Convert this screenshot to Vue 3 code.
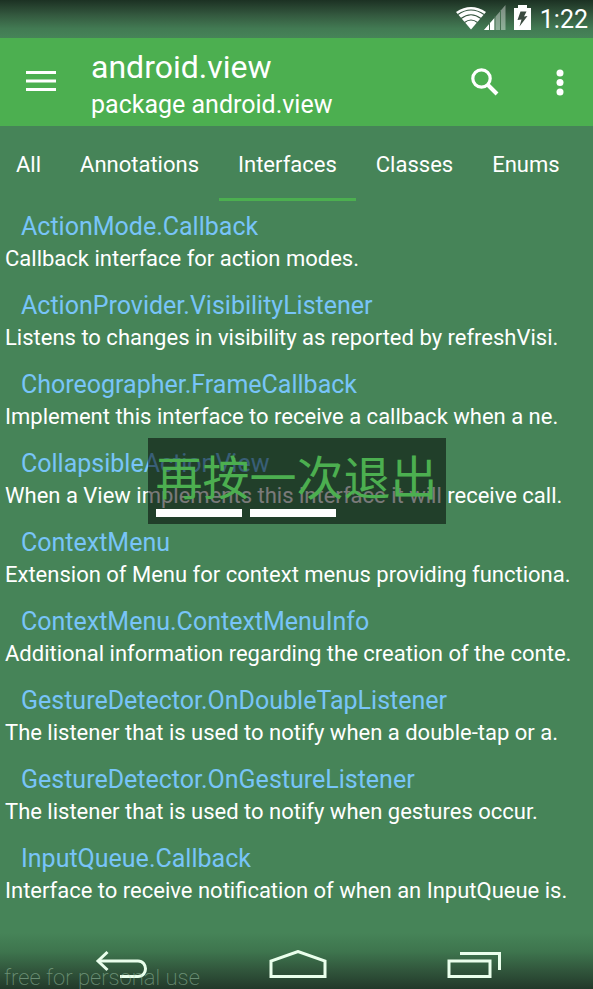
<script setup>
import { ref } from 'vue'

const tabs = ['All', 'Annotations', 'Interfaces', 'Classes', 'Enums']
const active = ref('Interfaces')

const entries = [
  { name: 'ActionMode.Callback', text: 'Callback interface for action modes.' },
  { name: 'ActionProvider.VisibilityListener', text: 'Listens to changes in visibility as reported by refreshVisi.' },
  { name: 'Choreographer.FrameCallback', text: 'Implement this interface to receive a callback when a ne.' },
  { name: 'CollapsibleActionView', text: 'When a View implements this interface it will receive call.' },
  { name: 'ContextMenu', text: 'Extension of Menu for context menus providing functiona.' },
  { name: 'ContextMenu.ContextMenuInfo', text: 'Additional information regarding the creation of the conte.' },
  { name: 'GestureDetector.OnDoubleTapListener', text: 'The listener that is used to notify when a double-tap or a.' },
  { name: 'GestureDetector.OnGestureListener', text: 'The listener that is used to notify when gestures occur.' },
  { name: 'InputQueue.Callback', text: 'Interface to receive notification of when an InputQueue is.' },
]
</script>

<template>
  <div class="screen">
    <div class="status">
      <svg class="radio" width="50" height="26" viewBox="0 0 50 26" aria-hidden="true">
        <path d="M15 24.500 L0 7 Q15 -3 30 7 Z" fill="#fff" />
        <g fill="none" stroke="#35553f" stroke-width="1.200">
          <path d="M2 9.500 Q15 0.500 28 9.500" />
          <path d="M5 13.500 Q15 6 25 13.500" />
          <path d="M8.500 17.500 Q15 12.500 21.500 17.500" />
        </g>
        <path d="M28 25 L49.500 0 V25 Z" fill="#fff" fill-opacity=".4" />
        <path d="M28 25 L38.500 13 V25 Z" fill="#fff" />
        <path d="M33.500 17 V25 M39 11 V25 M44.500 5 V25" stroke="#467052" />
      </svg>
      <svg class="battery" width="17" height="26" viewBox="0 0 17 26" aria-hidden="true">
        <path d="M4 0 H13 V3 H17 V25 H0 V3 H4 Z" fill="#fff" />
        <path d="M6.500 6.500 L12.500 6.500 L10 11.500 L13.500 11 L5.500 21.500 L7.500 14.500 L3.500 15 Z" fill="#3a4a3f" />
      </svg>
      <span class="clock">1:22</span>
    </div>

    <header class="toolbar">
      <button class="icon menu" aria-label="Menu">
        <svg width="30" height="24" viewBox="0 0 30 24">
          <path d="M0 2.500 H30 M0 11 H30 M0 19.500 H30" stroke="#fff" stroke-width="3" />
        </svg>
      </button>
      <div class="titles">
        <h1>android.view</h1>
        <p>package android.view</p>
      </div>
      <button class="icon search" aria-label="Search">
        <svg width="28" height="28" viewBox="0 0 28 28" fill="none" stroke="#fff">
          <circle cx="10.500" cy="10.500" r="8.700" stroke-width="3.200" />
          <path d="M16.500 16.500 L26 26" stroke-width="4" />
        </svg>
      </button>
      <button class="icon more" aria-label="More options">
        <svg width="8" height="27" viewBox="0 0 8 27" fill="#fff">
          <circle cx="4" cy="4" r="3.500" />
          <circle cx="4" cy="13.500" r="3.500" />
          <circle cx="4" cy="23" r="3.500" />
        </svg>
      </button>
    </header>

    <nav class="tabs">
      <button
        v-for="tab in tabs"
        :key="tab"
        class="tab"
        :class="{ active: tab === active }"
        @click="active = tab"
      >{{ tab }}</button>
    </nav>

    <ul class="list">
      <li v-for="entry in entries" :key="entry.name">
        <a href="#">{{ entry.name }}</a>
        <p>{{ entry.text }}</p>
      </li>
    </ul>

    <footer class="navbar">
      <span class="mark">free for personal use</span>
      <button class="icon" aria-label="Back">
        <svg width="54" height="30" viewBox="0 0 54 30" fill="none" stroke="#eaffec" stroke-width="3">
          <path d="M3 11 H43 C53 11 53 26.500 43 26.500 H25" />
          <path d="M12.500 2 L3 11 L12.500 20" />
        </svg>
      </button>
      <button class="icon" aria-label="Home">
        <svg width="58" height="30" viewBox="0 0 58 30" fill="none" stroke="#eaffec" stroke-width="3">
          <path d="M2 26.500 V11 L29 1.500 L56 11 V26.500 Z" />
        </svg>
      </button>
      <button class="icon" aria-label="Recent apps">
        <svg width="54" height="30" viewBox="0 0 54 30" fill="none" stroke="#eaffec" stroke-width="3">
          <path d="M2 11 H43 V26.500 H2 Z" />
          <path d="M13 3.500 H52.500 V20" />
        </svg>
      </button>
    </footer>

    <div class="toast" role="status">
      <span>再按一次退出</span>
      <div class="bars"><i></i><i></i></div>
    </div>
  </div>
</template>

<style>
body {
  margin: 0;
  background: #468458;
}
</style>

<style scoped>
.screen {
  position: relative;
  display: flex;
  flex-direction: column;
  min-height: 100vh;
  overflow: hidden;
  background: #468458;
  color: #fff;
  font-family: Roboto, "Noto Sans CJK SC", sans-serif;
}
button {
  border: 0;
  padding: 0;
  background: none;
  color: inherit;
  font: inherit;
}
.icon {
  display: flex;
  align-items: center;
  justify-content: center;
}
.status {
  display: flex;
  align-items: flex-end;
  justify-content: flex-end;
  height: 38px;
  padding-right: 5px;
  background: linear-gradient(#1c3123, #34593f 40%, #427a53 75%, #468458);
}
.radio,
.battery {
  margin-bottom: 7px;
}
.battery {
  margin-left: 8px;
  margin-right: 9px;
}
.clock {
  font-size: 25px;
  line-height: 36px;
}
.toolbar {
  display: flex;
  align-items: center;
  height: 88px;
  padding: 0 29px 0 26px;
  background: #4caf50;
}
.titles {
  flex: 1;
  margin-left: 35px;
  padding-top: 6px;
}
h1 {
  margin: 0;
  font-size: 32px;
  line-height: 40px;
  font-weight: 400;
}
.titles p {
  margin: 0;
  font-size: 25px;
  line-height: 36px;
}
.more {
  margin-left: 57px;
}
.tabs {
  display: flex;
  gap: 1px;
  height: 75px;
}
.tab {
  padding: 4px 19px 0;
  border-bottom: 3px solid transparent;
  font-size: 22px;
}
.tab:first-child {
  padding-left: 16px;
}
.tab.active {
  border-color: #4caf50;
}
.list {
  margin: 0;
  padding: 2px 0 0;
  list-style: none;
}
.list li {
  padding: 8px 5px 7px;
}
.list a {
  display: block;
  padding-left: 16px;
  color: #78c4f8;
  font-size: 25px;
  line-height: 32px;
  text-decoration: none;
}
.list p {
  margin: 0;
  font-size: 22px;
  line-height: 32px;
  white-space: nowrap;
}
.navbar {
  position: relative;
  flex: 1;
  display: flex;
  align-items: flex-end;
  justify-content: space-between;
  min-height: 72px;
  padding: 0 92px 9px 95px;
  box-sizing: border-box;
  background: linear-gradient(#468458 25%, #3e754e 50%, #31563c 75%, #22392a);
}
.mark {
  position: absolute;
  left: 4px;
  bottom: -2px;
  color: rgba(170, 210, 180, 0.5);
  font-size: 22px;
  font-weight: 200;
  line-height: 26px;
}
.toast {
  position: absolute;
  top: 438px;
  left: 50%;
  transform: translateX(-50%);
  padding: 11px 8px 7px;
  background: rgba(0, 0, 0, 0.52);
  color: #4caf50;
  font-size: 47px;
  line-height: 60px;
  white-space: nowrap;
}
.toast span {
  display: block;
}
.bars {
  display: flex;
  gap: 8px;
}
.bars i {
  width: 86px;
  height: 8px;
  background: #fff;
}
</style>
